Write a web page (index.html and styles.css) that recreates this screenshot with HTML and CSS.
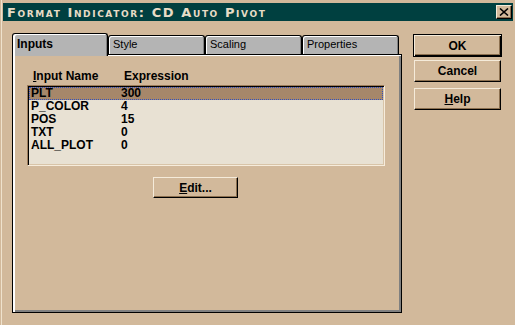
FILE: index.html
```html
<!DOCTYPE html>
<html lang="en">
<head>
  <meta charset="UTF-8" />
  <title>Format Indicator: CD Auto Pivot</title>
  <link rel="stylesheet" href="styles.css">
</head>
<body>
  <div class="window">
    <div class="titlebar">
      <span class="title">Format Indicator: CD Auto Pivot</span>
      <button class="close" aria-label="Close">
        <svg width="10" height="8" viewBox="0 0 10 8"><path d="M1 0.5 L9 7.5 M9 0.5 L1 7.5" stroke="#000" stroke-width="1.6" fill="none"/></svg>
      </button>
    </div>

    <div class="main">
      <div class="tabs-col">
        <div class="tab-row">
          <div class="tab active">Inputs</div>
          <div class="tab">Style</div>
          <div class="tab">Scaling</div>
          <div class="tab">Properties</div>
        </div>

        <div class="panel">
          <div class="list-head">
            <span class="col-name"><u>I</u>nput Name</span>
            <span>Expression</span>
          </div>
          <div class="list">
            <div class="row selected"><span class="col-name">PLT</span><span>300</span></div>
            <div class="row"><span class="col-name">P_COLOR</span><span>4</span></div>
            <div class="row"><span class="col-name">POS</span><span>15</span></div>
            <div class="row"><span class="col-name">TXT</span><span>0</span></div>
            <div class="row"><span class="col-name">ALL_PLOT</span><span>0</span></div>
          </div>
          <button class="btn edit"><u>E</u>dit...</button>
        </div>
      </div>

      <div class="side">
        <button class="btn default">OK</button>
        <button class="btn cancel">Cancel</button>
        <button class="btn help"><u>H</u>elp</button>
      </div>
    </div>
  </div>
</body>
</html>
```

FILE: styles.css
```css
body {
  margin: 0;
  background: #d2b99b;
  font-family: 'Liberation Sans', Arial, sans-serif;
  font-size: 12px;
  font-weight: bold;
  color: #000;
}

.window {
  width: 513px;
  height: 325px;
  margin-left: 1px;
  border-left: 1px solid #efe2cd;
  padding-top: 3px;
  box-sizing: border-box;
}

.titlebar {
  height: 18px;
  margin: 0 1px 0 1px;
  background: #004040;
  display: flex;
  align-items: center;
  justify-content: space-between;
}

.title {
  margin-left: 4px;
  color: #e8dcc6;
  font-family: 'DejaVu Sans', sans-serif;
  font-size: 13px;
  font-variant: small-caps;
  letter-spacing: 1.6px;
}

.close {
  width: 16px;
  height: 14px;
  margin-right: 1px;
  padding: 0;
  background: #d2b99b;
  border: 1px solid;
  border-color: #f5ebda #000 #000 #f5ebda;
  box-shadow: inset -1px -1px 0 #8c7050;
  display: flex;
  align-items: center;
  justify-content: center;
}

.main {
  display: flex;
  padding: 12px 0 0 10px;
}

.tabs-col {
  width: 390px;
}

.tab-row {
  display: flex;
  align-items: flex-end;
  height: 21px;
}

.tab {
  box-sizing: border-box;
  width: 97px;
  height: 19px;
  padding: 1px 0 0 4px;
  background: #b4b4b4;
  border: 1px solid #000;
  border-bottom: none;
  border-radius: 3px 3px 0 0;
  box-shadow: inset 1px 1px 0 #fff, inset -1px 0 0 #808080;
  font-size: 11px;
  font-weight: normal;
  line-height: 14px;
}

.tab.active {
  width: 96px;
  height: 23px;
  margin-bottom: -2px;
  padding: 3px 0 0 4px;
  position: relative;
  z-index: 1;
  font-size: 12px;
  font-weight: bold;
  box-shadow: inset 2px 1px 0 #fff, inset -1px 0 0 #808080;
}

.panel {
  box-sizing: border-box;
  height: 259px;
  border: 1px solid #000;
  box-shadow: inset 2px 1px 0 #fff, inset -2px -2px 0 #808080;
  padding: 15px 0 0 14px;
}

.list-head {
  display: flex;
  line-height: 13px;
  padding-left: 6px;
  margin-bottom: 2px;
}

.list-head .col-name {
  width: 91px;
}

.list {
  box-sizing: border-box;
  width: 358px;
  height: 81px;
  background: #e8e1d3;
  border: 1px solid;
  border-color: #9c7c5c #f6ecdc #f6ecdc #9c7c5c;
  box-shadow: inset 1px 1px 0 #000, inset -1px -1px 0 #d8c4a8;
  padding: 1px 1px 0 1px;
}

.row {
  display: flex;
  height: 13px;
  line-height: 13px;
  padding-left: 2px;
}

.row .col-name {
  width: 90px;
}

.row.selected {
  background: #a6876a;
  outline: 1px dotted #3050c0;
  outline-offset: -1px;
}

.btn {
  box-sizing: border-box;
  height: 22px;
  padding: 0;
  background: #d2b99b;
  border: 1px solid;
  border-color: #f5ebda #000 #000 #f5ebda;
  box-shadow: inset -1px -1px 0 #8c7050;
  font-family: 'Liberation Sans', Arial, sans-serif;
  font-size: 12px;
  font-weight: bold;
  color: #000;
}

.edit {
  display: block;
  width: 85px;
  height: 21px;
  margin: 11px 0 0 126px;
}

.side {
  display: flex;
  flex-direction: column;
  margin-left: 11px;
  padding-top: 1px;
}

.default {
  width: 89px;
  height: 23px;
  border: 1px solid #000;
  box-shadow: inset 1px 1px 0 #f5ebda, inset -1px -1px 0 #000, inset -2px -2px 0 #8c7050;
}

.cancel {
  width: 87px;
  margin: 3px 0 0 1px;
}

.help {
  width: 87px;
  margin: 6px 0 0 1px;
}
```
